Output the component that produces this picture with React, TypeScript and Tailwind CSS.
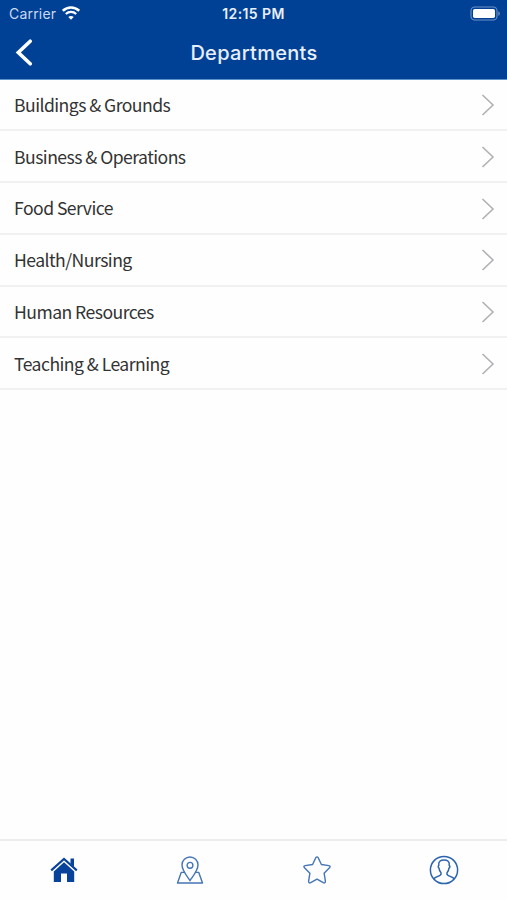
import { ReactNode } from 'react'

const departments = [
  'Buildings & Grounds',
  'Business & Operations',
  'Food Service',
  'Health/Nursing',
  'Human Resources',
  'Teaching & Learning',
]

const WifiIcon = () => (
  <svg width="18" height="14" viewBox="0 0 18 14" fill="none" stroke="white" className="-mt-0.5">
    <path d="M0.8 4.9C5.5 0.4 12.5 0.4 17.2 4.9" strokeWidth="2.6" />
    <path d="M3.8 8C6.8 5.2 11.2 5.2 14.2 8" strokeWidth="2.3" />
    <path d="M9 13.8L6.3 11C7.8 9.5 10.2 9.5 11.7 11Z" fill="white" stroke="none" />
  </svg>
)

const BatteryIcon = () => (
  <svg width="31" height="15" viewBox="0 0 31 15" fill="none">
    <rect x="1" y="1" width="26" height="13" rx="3.8" stroke="#6f93c6" strokeWidth="1.1" />
    <rect x="3" y="3" width="22" height="9" rx="1.8" fill="white" />
    <path d="M28.3 5.2C30.3 6 30.3 9 28.3 9.8Z" fill="#6f93c6" />
  </svg>
)

const HomeIcon = () => (
  <svg width="28" height="26" viewBox="0 0 28 26" fill="#07429b" className="ml-px">
    <path d="M20.5 1.6H24V10L20.5 6.8Z" />
    <path d="M1.2 13.4L14 1.9L26.8 13.4" fill="none" stroke="#07429b" strokeWidth="2.1" />
    <path d="M14 5.3L24.2 14.4V25H17V16.5H11V25H3.8V14.4Z" />
  </svg>
)

const MapIcon = () => (
  <svg width="28" height="28" viewBox="0 0 28 28" fill="none" stroke="#4475b5" strokeWidth="1.4">
    <path d="M14 24.5C11.2 20.3 6 14.5 6 9A8 8 0 0 1 22 9C22 14.5 16.8 20.3 14 24.5Z" />
    <circle cx="14" cy="9.3" r="2.9" />
    <path d="M8.3 16.4H5.2L1.5 27H26.5L22.8 16.4H19.7" strokeLinejoin="round" />
  </svg>
)

const StarIcon = () => (
  <svg width="28" height="28" viewBox="0 0 28 28" fill="none" stroke="#4475b5" strokeWidth="1.4" strokeLinejoin="round">
    <path d="M12.8 1.7Q14 0 15.2 1.7L18.4 8.5L25.9 9.6Q28 10.1 26.5 11.8L21.1 17.2L22.4 25.2Q22.4 27.6 20.3 26.7L14 23.2L7.7 26.7Q5.6 27.6 5.6 25.2L6.9 17.2L1.5 11.8Q0 10.1 2.1 9.6L9.6 8.5Z" />
  </svg>
)

const ProfileIcon = () => (
  <svg width="30" height="30" viewBox="0 0 30 30" fill="none" stroke="#2c64ad" strokeWidth="1.5">
    <circle cx="15" cy="15" r="13.6" />
    <path d="M4.6 23.7C6.5 22 9 21.4 11 20.3Q12.6 19.3 12 17.8C10.6 16.4 10.2 14.8 10 13.2C9 12.2 9 11 9.8 10.2C9.2 6.6 11.5 5 15 5C18.5 5 20.8 6.6 20.2 10.2C21 11 21 12.2 20 13.2C19.8 14.8 19.4 16.4 18 17.8Q17.4 19.3 19 20.3C21 21.4 23.5 22 25.4 23.7" />
  </svg>
)

const Tab = ({ label, children }: { label: string; children: ReactNode }) => (
  <button aria-label={label} className="flex flex-1 items-center justify-center">
    {children}
  </button>
)

const App = () => {
  return (
    <div className="flex h-[900px] w-full flex-col bg-[#fefefe] font-['Inter',sans-serif]">
      <header className="h-[79.5px] border-b border-[#5b93cb] bg-[#004195] text-[#e8effa]">
        <div className="grid h-[27px] grid-cols-[1fr_80px_1fr] items-center pl-[9px] pr-[6px]">
          <div className="flex items-center gap-[6px] text-[14px] tracking-[0.2px] text-[#c9daf1]">
            Carrier
            <WifiIcon />
          </div>
          <div className="-ml-[3px] text-center text-[14px] font-semibold tracking-[0.4px]">12:15 PM</div>
          <div className="flex justify-end">
            <BatteryIcon />
          </div>
        </div>
        <div className="grid h-[51px] grid-cols-[60px_1fr_60px] items-center">
          <button aria-label="Back" className="pl-[15px]">
            <svg width="20" height="28" viewBox="0 0 20 28" fill="none" stroke="white" strokeWidth="3.6">
              <path d="M15.2 2.2L3.3 13.5L15.2 24.8" strokeLinecap="round" />
            </svg>
          </button>
          <h1 className="pl-px text-center text-[20px] font-medium tracking-[0.3px]">Departments</h1>
        </div>
      </header>
      <ul className="flex-1 font-['Noto_Sans_CJK_SC',sans-serif] text-[17.6px] tracking-[-0.54px] text-[#333333]">
        {departments.map((x) => (
          <li
            key={x}
            className="flex h-[51.75px] items-center justify-between border-b-2 border-[#f1f1f1] pl-[14px] pr-[12px] pt-[1.5px]"
          >
            <span>{x}</span>
            <svg width="14" height="22" viewBox="0 0 14 22" fill="none" stroke="#afb1b4" strokeWidth="1.6">
              <path d="M1.5 1L12 11L1.5 21" />
            </svg>
          </li>
        ))}
      </ul>
      <nav className="flex h-[61px] border-t-2 border-[#ededed] pb-px">
        <Tab label="Home">
          <HomeIcon />
        </Tab>
        <Tab label="Map">
          <MapIcon />
        </Tab>
        <Tab label="Favorites">
          <StarIcon />
        </Tab>
        <Tab label="Profile">
          <ProfileIcon />
        </Tab>
      </nav>
    </div>
  )
}

export default App
